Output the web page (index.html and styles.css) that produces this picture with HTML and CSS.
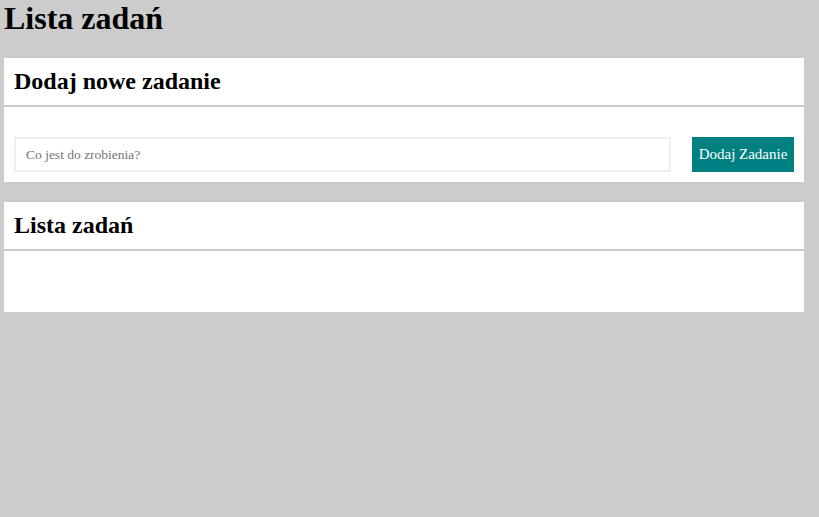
FILE: index.html
```html
<!DOCTYPE html>
<html lang="pl">
<head>
<meta charset="utf-8">
<title>Lista zadań</title>
<link rel="stylesheet" href="styles.css">
</head>
<body>
<div class="app">
  <h1 class="title">Lista zadań</h1>
  <section class="card">
    <h2 class="card-header">Dodaj nowe zadanie</h2>
    <div class="card-body card-body-form">
      <form class="task-form">
        <input class="task-input" type="text" placeholder="Co jest do zrobienia?">
        <button class="task-button" type="button">Dodaj Zadanie</button>
      </form>
    </div>
  </section>
  <section class="card">
    <h2 class="card-header">Lista zadań</h2>
    <div class="card-body card-body-list">
      <ul class="task-list"></ul>
    </div>
  </section>
</div>
</body>
</html>
```

FILE: styles.css
```css
html, body {
  margin: 0;
  padding: 0;
  background: #cccccc;
  font-family: "Liberation Serif", "Times New Roman", serif;
  color: #000;
}

.app {
  width: 800px;
  padding: 0 4px;
}

.title {
  font-size: 32px;
  font-weight: bold;
  margin: 0 0 21px 0;
  line-height: 37px;
}

.card {
  background: #ffffff;
  margin-bottom: 20px;
}

.card-header {
  font-size: 24px;
  font-weight: bold;
  margin: 0;
  padding: 10px 10px;
  line-height: 27px;
  border-bottom: 2px solid #cccccc;
}

.card-body-form {
  padding: 30px 10px 10px 10px;
}

.card-body-list {
  height: 61px;
}

.task-form {
  display: flex;
  align-items: center;
  gap: 21px;
  margin: 0;
}

.task-input {
  flex: 1;
  height: 35px;
  box-sizing: border-box;
  border: 2px solid #eeeeee;
  padding: 0 10px;
  font-family: "Liberation Serif", "Times New Roman", serif;
  font-size: 13.5px;
  outline: none;
}

.task-input::placeholder {
  color: #757575;
}

.task-button {
  width: 102px;
  height: 35px;
  box-sizing: border-box;
  border: none;
  background: #008080;
  color: #ffffff;
  font-family: "Liberation Serif", "Times New Roman", serif;
  font-size: 15px;
  padding: 0;
}

.task-list {
  margin: 0;
  padding: 0;
  list-style: none;
}
```
